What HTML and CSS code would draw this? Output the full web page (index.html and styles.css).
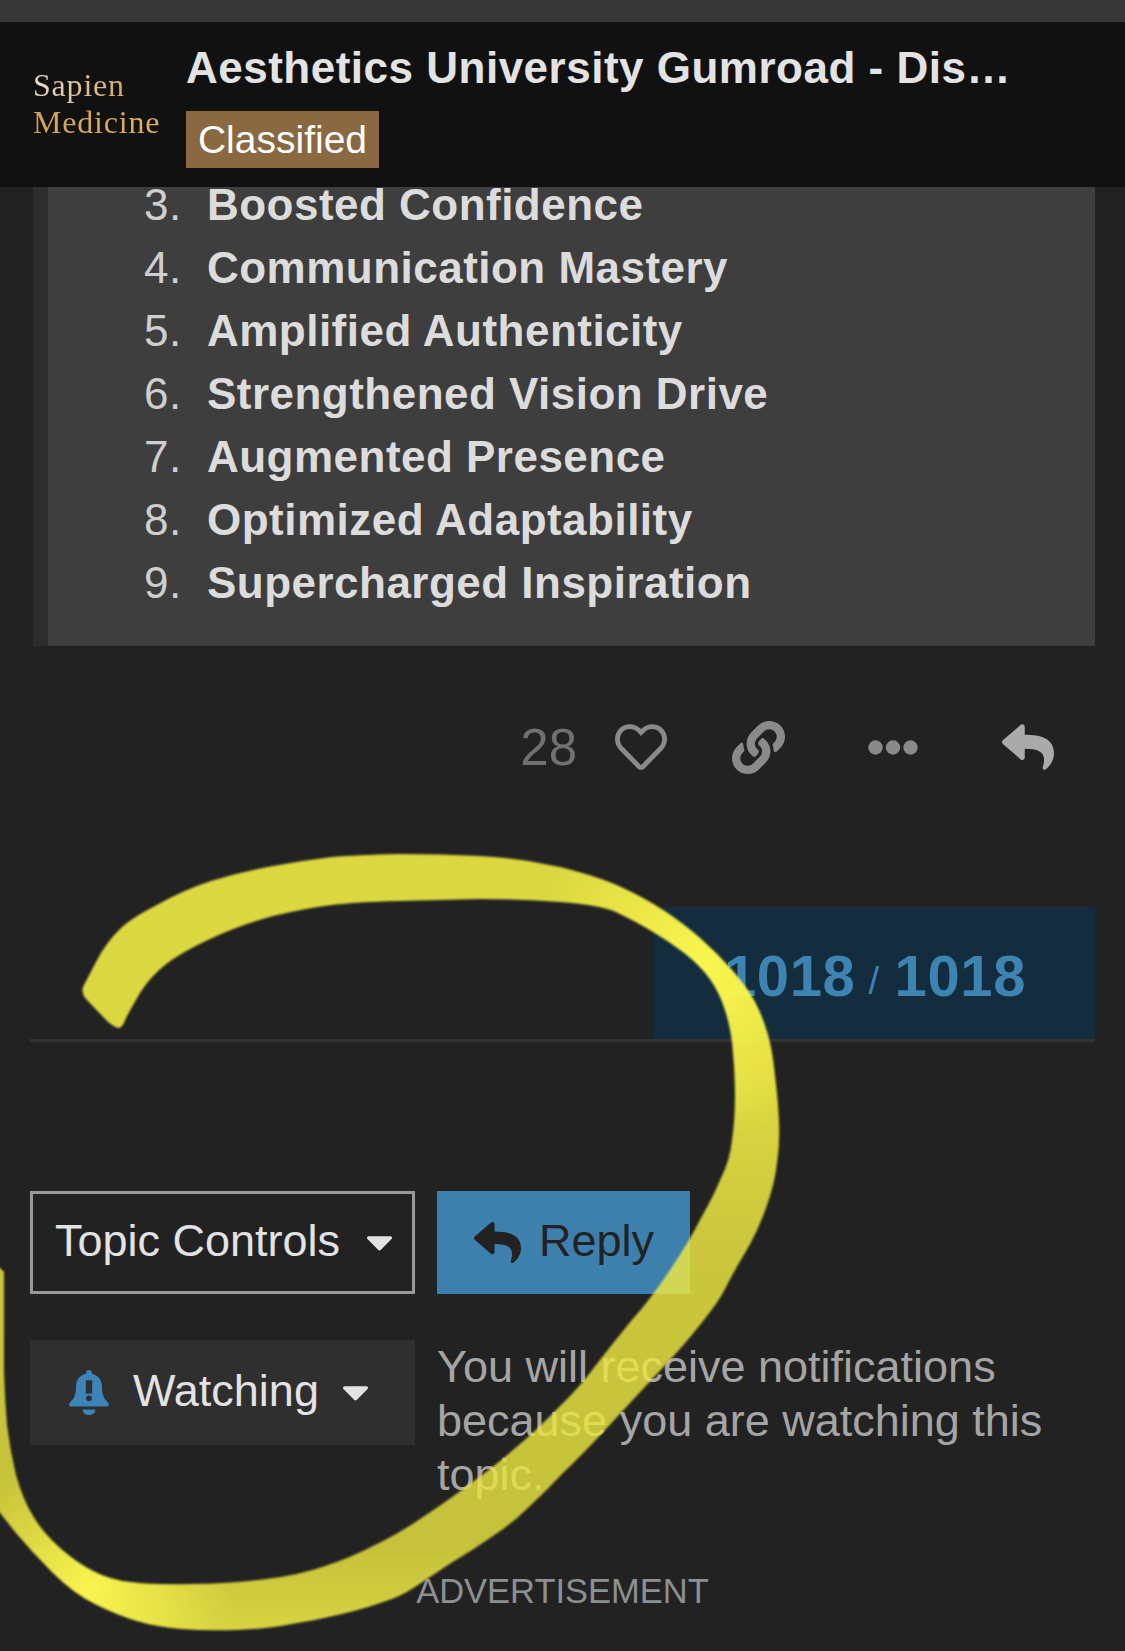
FILE: index.html
```html
<!DOCTYPE html>
<html lang="en">
<head>
<meta charset="utf-8">
<title>Aesthetics University Gumroad</title>
<link rel="stylesheet" href="styles.css">
</head>
<body>
<div class="page">
  <div class="top-strip"></div>
  <header class="header">
    <div class="logo"><span class="logo-a">Sapien</span><span class="logo-b">Medicine</span></div>
    <div class="title-col">
      <div class="title">Aesthetics University Gumroad - Dis…</div>
      <span class="badge">Classified</span>
    </div>
  </header>
  <section class="panel">
    <ol class="list" start="3">
      <li><strong>Boosted Confidence</strong></li>
      <li><strong>Communication Mastery</strong></li>
      <li><strong>Amplified Authenticity</strong></li>
      <li><strong>Strengthened Vision Drive</strong></li>
      <li><strong>Augmented Presence</strong></li>
      <li><strong>Optimized Adaptability</strong></li>
      <li><strong>Supercharged Inspiration</strong></li>
    </ol>
  </section>
  <div class="actions">
    <span class="count">28</span>
    <svg class="ic ic-heart" viewBox="0 0 512 512"><path d="M458.4 64.3C400.6 15.7 311.3 23 256 79.3 200.7 23 111.4 15.6 53.6 64.3-21.6 127.6-10.6 230.8 43 285.5l175.4 178.7c10 10.2 23.4 15.9 37.6 15.9 14.3 0 27.6-5.6 37.6-15.8L469 285.6c53.5-54.7 64.7-157.9-10.6-221.3zm-23.6 187.5L259.4 430.5c-2.4 2.4-4.4 2.4-6.8 0L77.2 251.8c-36.5-37.2-43.9-107.6 7.3-150.7 38.9-32.7 98.9-27.8 136.5 10.5l35 35.7 35-35.7c37.8-38.5 97.8-43.2 136.5-10.6 51.1 43.1 43.5 113.9 7.3 150.8z"/></svg>
    <svg class="ic ic-link" viewBox="0 0 512 512"><path d="M326.612 185.391c59.747 59.809 58.927 155.698.36 214.59-.11.12-.24.25-.36.37l-67.2 67.2c-59.27 59.27-155.699 59.262-214.96 0-59.27-59.26-59.27-155.7 0-214.96l37.106-37.106c9.84-9.84 26.786-3.3 27.294 10.606.648 17.722 3.826 35.527 9.69 52.721 1.986 5.822.567 12.262-3.783 16.612l-13.087 13.087c-28.026 28.026-28.905 73.66-1.155 101.96 28.024 28.579 74.086 28.749 102.325.51l67.2-67.19c28.191-28.191 28.073-73.757 0-101.83-3.701-3.694-7.429-6.564-10.341-8.569a16.037 16.037 0 0 1-6.947-12.606c-.396-10.567 3.348-21.456 11.698-29.806l21.054-21.055c5.521-5.521 14.182-6.199 20.584-1.731a152.482 152.482 0 0 1 20.522 17.197zM467.547 44.449c-59.261-59.262-155.69-59.27-214.96 0l-67.2 67.2c-.12.12-.25.25-.36.37-58.566 58.892-59.387 154.781.36 214.59a152.454 152.454 0 0 0 20.521 17.196c6.402 4.468 15.064 3.789 20.584-1.731l21.054-21.055c8.35-8.35 12.094-19.239 11.698-29.806a16.037 16.037 0 0 0-6.947-12.606c-2.912-2.005-6.64-4.875-10.341-8.569-28.073-28.073-28.191-73.639 0-101.83l67.2-67.19c28.239-28.239 74.3-28.069 102.325.51 27.75 28.3 26.872 73.934-1.155 101.96l-13.087 13.087c-4.35 4.35-5.769 10.79-3.783 16.612 5.864 17.194 9.042 34.999 9.69 52.721.509 13.906 17.454 20.446 27.294 10.606l37.106-37.106c59.271-59.259 59.271-155.699.001-214.959z"/></svg>
    <svg class="ic ic-dots" viewBox="0 0 50 15"><circle cx="7.5" cy="7.5" r="7.2"/><circle cx="25" cy="7.5" r="7.2"/><circle cx="42.5" cy="7.5" r="7.2"/></svg>
    <svg class="ic ic-reply" viewBox="0 0 512 512"><path d="M8.309 189.836L184.313 37.851C199.719 24.546 224 35.347 224 56.015v80.053c160.629 1.839 288 34.032 288 186.258 0 61.441-39.581 122.309-83.333 154.132-13.653 9.931-33.111-2.533-28.077-18.631 45.344-145.012-21.507-183.51-176.59-185.742V360c0 20.7-24.3 31.453-39.687 18.164l-176.004-152c-11.071-9.562-11.086-26.753 0-36.328z"/></svg>
  </div>
  <div class="progress-row">
    <div class="progress"><b>1018</b><span class="slash">/</span><b>1018</b></div>
  </div>
  <div class="controls">
    <button class="btn btn-outline">Topic Controls<svg class="caret" viewBox="0 180 320 185"><path d="M31.3 192h257.3c17.8 0 26.7 21.5 14.1 34.1L174.1 354.8c-7.8 7.8-20.5 7.8-28.3 0L17.2 226.1C4.6 213.5 13.5 192 31.3 192z"/></svg></button>
    <button class="btn btn-reply"><svg class="reply-ic" viewBox="0 0 512 512"><path d="M8.309 189.836L184.313 37.851C199.719 24.546 224 35.347 224 56.015v80.053c160.629 1.839 288 34.032 288 186.258 0 61.441-39.581 122.309-83.333 154.132-13.653 9.931-33.111-2.533-28.077-18.631 45.344-145.012-21.507-183.51-176.59-185.742V360c0 20.7-24.3 31.453-39.687 18.164l-176.004-152c-11.071-9.562-11.086-26.753 0-36.328z"/></svg>Reply</button>
  </div>
  <div class="notify">
    <button class="btn btn-watch"><svg class="bell" viewBox="0 0 40 45"><path d="M20 0c-1.8 0-3 1.3-3 3v.8C10 5.5 7 11 7 17c0 7-1.5 11-6 15.5-1.5 1.5-.8 4 1.2 4h35.6c2 0 2.7-2.5 1.2-4C34.500 28 33 24 33 17c0-6-3-11.500-10-13.200V3c0-1.700-1.200-3-3-3z"/><path d="M13.500 39.500h13c0 3-2.800 5.500-6.500 5.500s-6.500-2.500-6.500-5.500z"/><path class="bell-mark" d="M16.800 10.300h6.400v13.300h-6.400z"/><circle class="bell-mark" cx="20" cy="28.300" r="2.900"/></svg>Watching<svg class="caret" viewBox="0 180 320 185"><path d="M31.3 192h257.3c17.8 0 26.7 21.5 14.1 34.1L174.1 354.8c-7.8 7.8-20.5 7.8-28.3 0L17.2 226.1C4.6 213.5 13.5 192 31.3 192z"/></svg></button>
    <p class="notify-text">You will receive notifications because you are watching this topic.</p>
  </div>
  <div class="ad">ADVERTISEMENT</div>
  <svg class="scribble" viewBox="0 0 1125 1651" aria-hidden="true">
    <defs>
      <linearGradient id="ink" gradientUnits="userSpaceOnUse" x1="0" y1="850" x2="0" y2="1640">
        <stop offset="0" stop-color="#f1ec44" stop-opacity="0.9"/>
        <stop offset="0.3" stop-color="#f1ec44" stop-opacity="0.9"/>
        <stop offset="0.5" stop-color="#f0eb43" stop-opacity="0.82"/>
        <stop offset="0.88" stop-color="#eae53f" stop-opacity="0.82"/>
        <stop offset="1" stop-color="#faf548" stop-opacity="0.85"/>
      </linearGradient>
      <radialGradient id="glow-top" gradientUnits="userSpaceOnUse" cx="700" cy="970" r="170">
        <stop offset="0" stop-color="#fffa50" stop-opacity="0.9"/>
        <stop offset="1" stop-color="#fffa50" stop-opacity="0"/>
      </radialGradient>
      <radialGradient id="glow-low" gradientUnits="userSpaceOnUse" cx="90" cy="1590" r="140">
        <stop offset="0" stop-color="#fffa50" stop-opacity="0.9"/>
        <stop offset="1" stop-color="#fffa50" stop-opacity="0"/>
      </radialGradient>
      <filter id="soft" x="-5%" y="-5%" width="110%" height="110%"><feGaussianBlur stdDeviation="1.3"/></filter>
      <path id="stroke" d="M96 962 Q106 942 122 927 Q135 916 155 906 Q183 890 211 881 Q240 872 273 866 Q307 860 332 857 Q357 855 398 854 Q440 854 480 856 Q520 858 560 867 Q600 877 621 887 Q643 897 663 910 Q683 923 700 938 Q717 953 732 970 Q747 987 755 1002 Q763 1017 768 1035 Q773 1053 775 1076 Q778 1100 779 1121 Q780 1143 777 1163 Q775 1183 766 1208 Q757 1233 745 1253 Q733 1273 726 1287 Q720 1300 700 1325 Q680 1350 655 1376 Q630 1403 605 1430 Q580 1457 563 1473 Q547 1490 530 1506 Q513 1523 493 1536 Q473 1550 451 1563 Q430 1577 415 1587 Q400 1597 383 1602 Q367 1608 342 1614 Q317 1620 292 1624 Q267 1629 237 1630 Q207 1631 182 1629 Q157 1627 137 1621 Q117 1615 95 1604 Q73 1593 53 1573 Q33 1553 16 1533 Q0 1513 -10 1500 L-10 1268 L0 1268 L4 1272 L4 1373 Q5 1400 7 1425 Q10 1450 16 1475 Q23 1500 33 1516 Q43 1533 60 1548 Q77 1563 93 1571 Q110 1580 130 1582 Q150 1585 191 1584 Q233 1584 266 1579 Q300 1575 325 1566 Q350 1558 375 1545 Q400 1533 426 1515 Q453 1497 471 1483 Q490 1470 513 1450 Q537 1430 558 1408 Q580 1387 596 1365 Q613 1343 631 1321 Q650 1300 670 1270 Q690 1240 701 1218 Q713 1197 721 1178 Q730 1160 732 1140 Q735 1120 735 1096 Q735 1073 733 1053 Q732 1033 726 1013 Q720 993 710 979 Q700 965 683 952 Q667 940 650 930 Q633 920 616 912 Q600 905 560 902 Q520 899 480 899 Q440 900 398 901 Q357 902 332 905 Q307 908 273 916 Q240 925 210 939 Q180 953 165 965 Q150 977 140 993 Q130 1010 126 1018 Q123 1027 119 1028 Q115 1028 107 1021 L86 999 Q80 992 84 985 L96 962 Z"/>
    </defs>
    <g filter="url(#soft)">
      <use href="#stroke" fill="url(#ink)"/>
      <use href="#stroke" fill="url(#glow-top)"/>
      <use href="#stroke" fill="url(#glow-low)"/>
    </g>
  </svg>
</div>
</body>
</html>
```

FILE: styles.css
```css
* { box-sizing: border-box; }
html, body { margin: 0; padding: 0; background: #222; }
.page {
  position: relative;
  width: 1125px;
  height: 1651px;
  overflow: hidden;
  background: #222;
  font-family: "Liberation Sans", Arial, sans-serif;
}
.top-strip { height: 22px; background: #363636; }
.header {
  position: relative;
  z-index: 1;
  height: 165px;
  background: #111;
  display: flex;
  padding-left: 33px;
}
.logo {
  width: 153px;
  padding-top: 45px;
  display: flex;
  flex-direction: column;
  align-items: flex-start;
  font-family: "Liberation Serif", serif;
  font-size: 32px;
  line-height: 37px;
  letter-spacing: 0.8px;
}
.logo-a {
  background: linear-gradient(100deg, #e6ded2, #d8a860);
  -webkit-background-clip: text;
  background-clip: text;
  color: transparent;
}
.logo-b {
  background: linear-gradient(100deg, #d4a055, #e0b060);
  -webkit-background-clip: text;
  background-clip: text;
  color: transparent;
}
.title-col { display: flex; flex-direction: column; align-items: flex-start; }
.title {
  margin-top: 22px;
  font-size: 44px;
  line-height: 48px;
  font-weight: 700;
  color: #e3e3e3;
  letter-spacing: 0.5px;
  white-space: nowrap;
}
.badge {
  margin-top: 19px;
  height: 57px;
  width: 193px;
  background: #8a6842;
  color: #fff;
  font-size: 39px;
  line-height: 57px;
  text-align: center;
}
.panel {
  margin: -14px 30px 0 33px;
  border-left: 15px solid #2d2d2d;
  background: #3e3e3e;
  height: 473px;
}
.list {
  margin: 0;
  padding: 0 0 0 159px;
  color: #cfcfcf;
  font-size: 44px;
  line-height: 63px;
  letter-spacing: 0.48px;
}
.list li::marker { content: counter(list-item) ".\00a0\00a0"; }
.list strong { color: #dcdcdc; font-weight: 700; }
.actions {
  height: 132px;
  display: flex;
  align-items: center;
  justify-content: flex-end;
  padding: 0 71px 0 0;
  margin-top: 35px;
}
.count { color: #707070; font-size: 51px; margin-right: 38px; }
.ic { fill: #8a8a8a; display: block; }
.ic-heart { width: 52px; height: 52px; margin-right: 65px; }
.ic-link { width: 53px; height: 53px; margin-right: 83px; }
.ic-dots { width: 50px; height: 15px; margin-right: 84px; }
.ic-reply { width: 52px; height: 52px; fill: #aaa; }
.progress-row {
  margin: 94px 30px 0 30px;
  height: 135px;
  border-bottom: 3px solid #333;
  display: flex;
  justify-content: flex-end;
}
.progress {
  width: 441px;
  height: 132px;
  background: #132d3e;
  color: #3d84b3;
  display: flex;
  justify-content: flex-end;
  align-items: center;
  padding: 4px 69px 0 0;
  font-size: 58px;
  letter-spacing: 0.6px;
}
.progress b { font-weight: 700; }
.slash { font-size: 38px; margin: 12px 15px 0 13px; }
.controls {
  display: flex;
  gap: 22px;
  margin: 149px 0 0 30px;
}
.btn {
  font-family: inherit;
  font-size: 45px;
  border: 0;
  padding: 0 0 3px;
  display: flex;
  align-items: center;
  color: #e3e3e3;
  background: none;
  height: 103px;
}
.btn-outline {
  width: 385px;
  border: 3px solid #999;
  padding-left: 22px;
}
.caret { width: 27px; height: 16px; fill: #e3e3e3; margin: 4px 0 0 26px; flex: none; }
.btn-reply {
  width: 253px;
  background: #3d80ae;
  color: #222;
  padding-left: 37px;
}
.reply-ic { width: 47px; height: 47px; fill: #222; margin: 3px 18px 0 0; }
.notify {
  display: flex;
  gap: 22px;
  margin: 46px 30px 0 30px;
  align-items: flex-start;
}
.btn-watch {
  flex: none;
  width: 385px;
  height: 105px;
  background: #2f2f2f;
  padding-left: 39px;
}
.btn-watch .caret { margin-left: 23px; }
.bell { width: 40px; height: 45px; fill: #3d84b8; margin: 3px 24px 0 0; flex: none; }
.bell-mark { fill: #2f2f2f; }
.notify-text {
  margin: 0;
  color: #a5a5a5;
  font-size: 45px;
  line-height: 54px;
}
.ad {
  position: absolute;
  left: 0;
  right: 0;
  top: 1570px;
  text-align: center;
  color: #8b9093;
  font-size: 34.5px;
  line-height: 42px;
}
.scribble {
  position: absolute;
  left: 0;
  top: 0;
  width: 1125px;
  height: 1651px;
  pointer-events: none;
  z-index: 2;
}
```
